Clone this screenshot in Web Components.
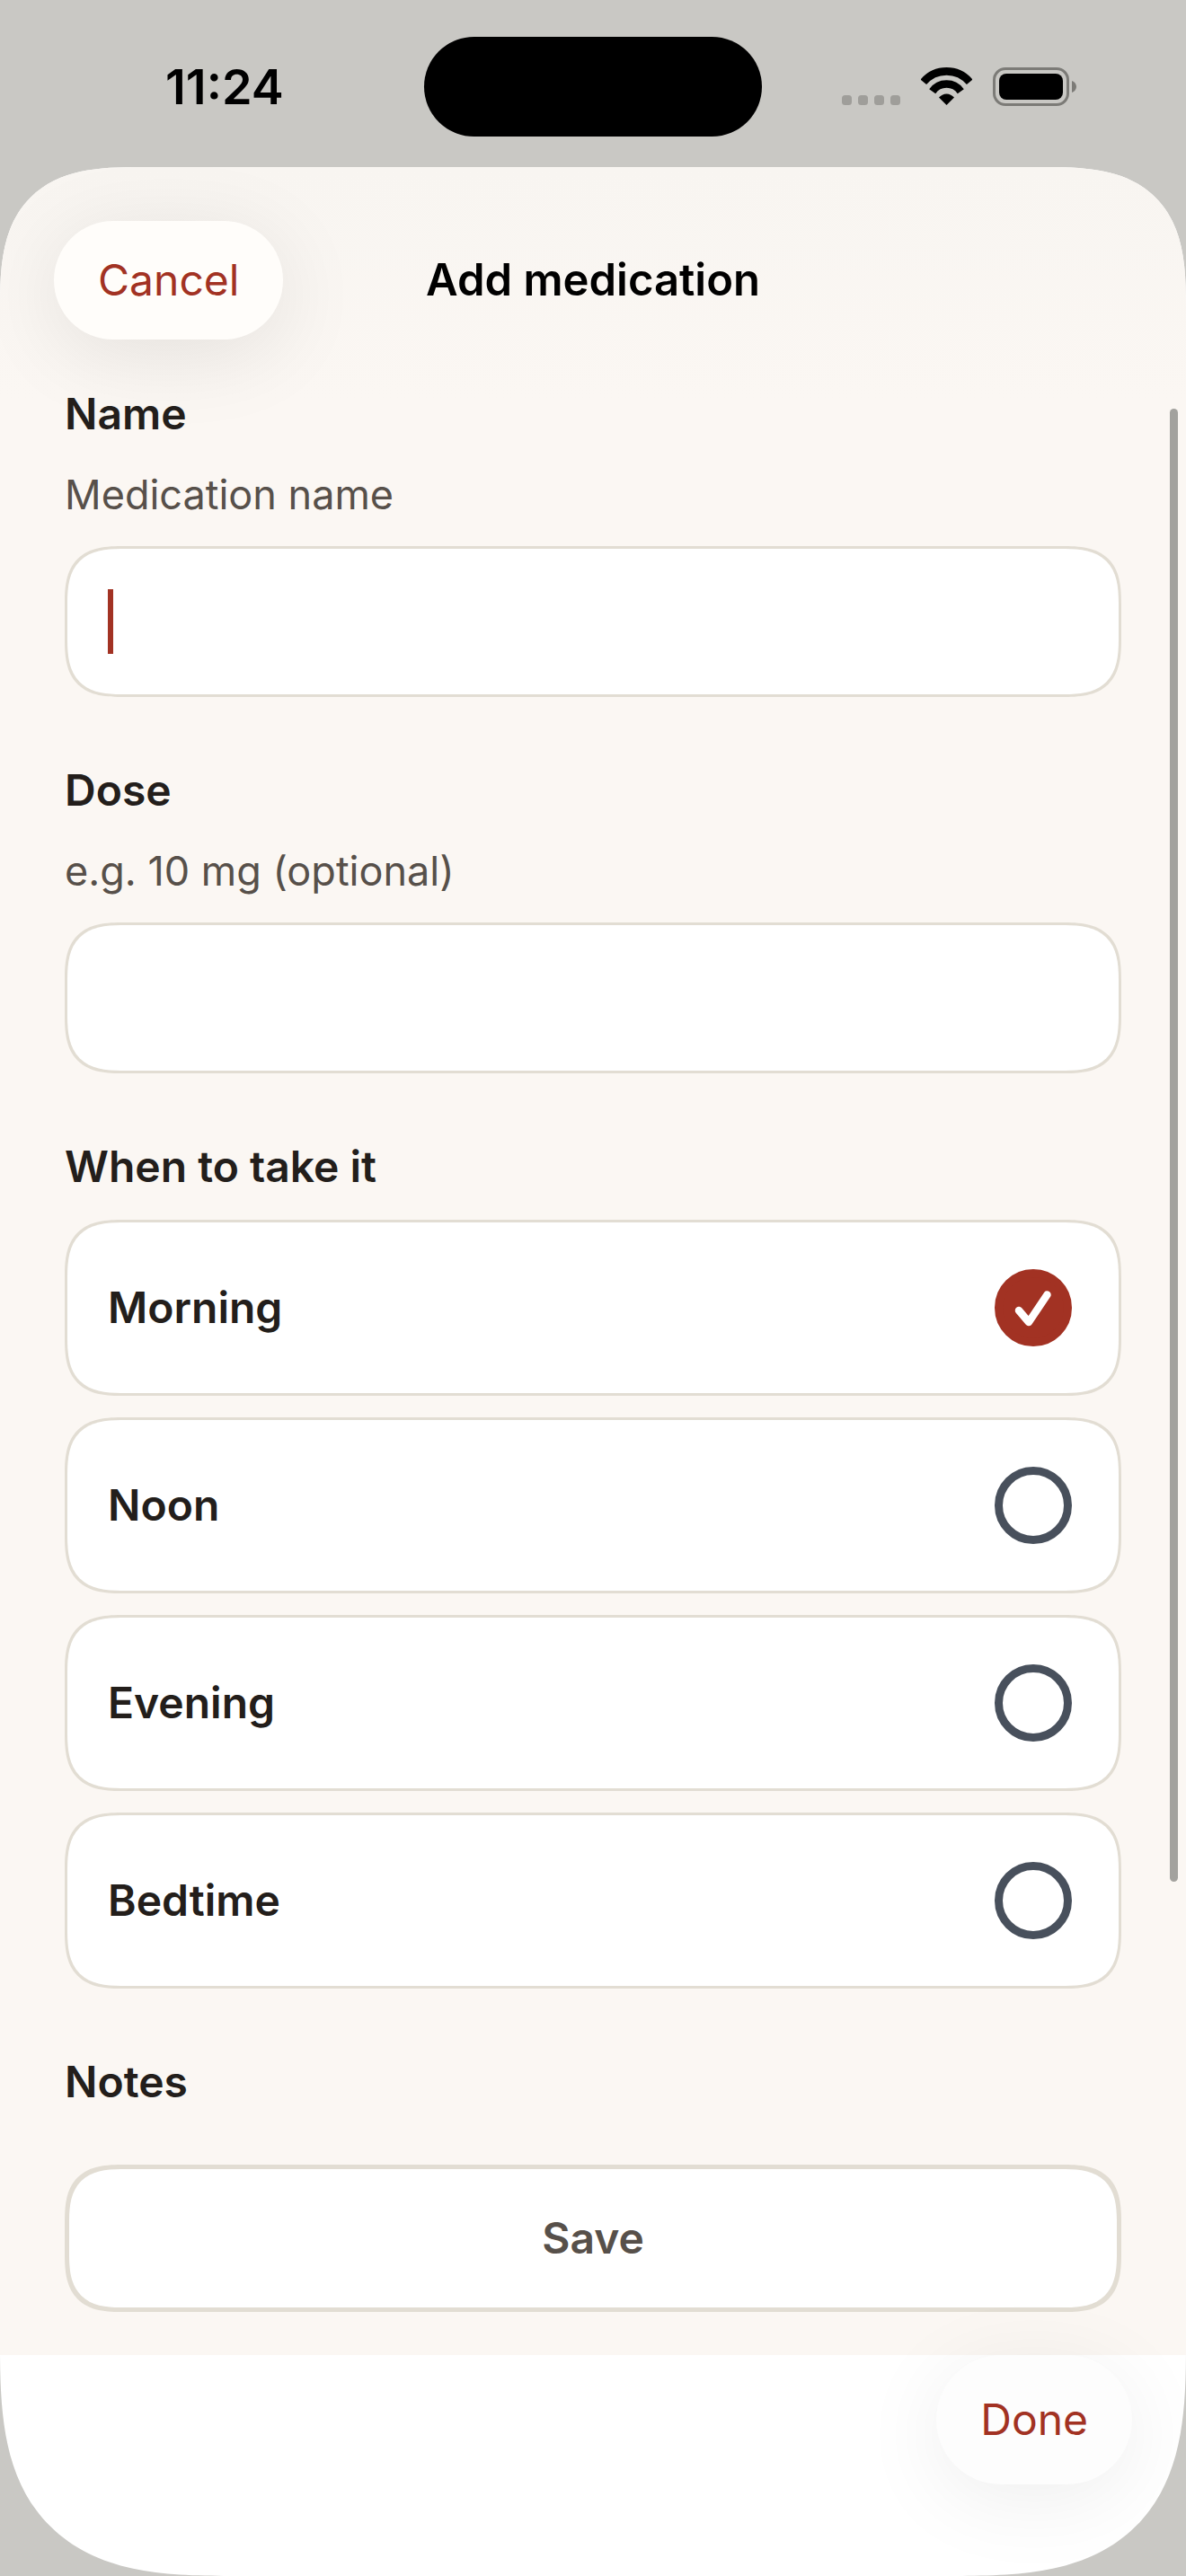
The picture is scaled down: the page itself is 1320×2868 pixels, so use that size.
<!DOCTYPE html>
<html lang="en">
<head>
<meta charset="utf-8">
<meta name="viewport" content="width=device-width, initial-scale=1">
<title>Add medication</title>
<style>
    :root {
        --accent: #a23223;
        --text: #231e1b;
        --muted: #57504a;
        --page: #fbf7f3;
        --line: #e2ddd3;
        --ring: #48505c;
        --text-size: 48px;
        --title-size: 49px;
        --hint-size: 45px;
        --row: 60px;
        --card-radius: 48px;
        --card-shape: round;
    }

    @supports (corner-shape: superellipse(1.5)) {
        :root {
            --card-radius: 66px;
            --card-shape: superellipse(1.5);
        }
    }

    body {
        margin: 0;
        background: #c9c8c4;
        color: var(--text);
        font-family: Inter, "Liberation Sans", sans-serif;
        font-size: var(--text-size);
        line-height: var(--row);
    }
</style>
</head>
<body>
<medication-app></medication-app>

<script>
class StatusBar extends HTMLElement {
    constructor() {
        super();
        this.attachShadow({ mode: 'open' });
    }

    connectedCallback() {
        const hora = this.getAttribute('time') || '';

        this.shadowRoot.innerHTML = `
        <style>
            :host {
                display: grid;
                grid-template-columns: 1fr 376px 1fr;
                align-items: center;
                padding: 41px 0 34px;
                color: #000;
            }

            .time {
                padding-left: 184px;
                font-size: 54px;
                font-weight: 600;
            }

            .island {
                height: 111px;
                border-radius: 56px;
                background: #000;
            }

            .icons {
                display: flex;
                gap: 23px;
                padding-left: 89px;
            }
        </style>

        <span class="time">${hora}</span>
        <span class="island"></span>
        <span class="icons">
            <svg width="65" height="43" viewBox="0 0 65 43" fill="#9f9e9a" aria-hidden="true">
                <rect x="0" y="31" width="11" height="11" rx="3.5"></rect>
                <rect x="18" y="31" width="11" height="11" rx="3.5"></rect>
                <rect x="36" y="31" width="11" height="11" rx="3.5"></rect>
                <rect x="54" y="31" width="11" height="11" rx="3.5"></rect>
            </svg>
            <svg width="57" height="43" viewBox="0 0 57 43" fill="none" stroke="#000" stroke-width="8.6" aria-label="Wi-Fi">
                <path d="M2.8 16.3A33.6 33.6 0 0 1 54.2 16.3"></path>
                <path d="M12.7 26.7A19.4 19.4 0 0 1 44.3 26.7"></path>
                <path d="M28.5 42 20 33.6A11 11 0 0 1 37 33.6Z" fill="#000" stroke="none"></path>
            </svg>
            <svg width="93" height="43" viewBox="0 0 93 43" aria-label="Battery full">
                <rect x="1.5" y="1.5" width="82" height="40" rx="12.5" fill="none" stroke="#7c7b77" stroke-width="3"></rect>
                <rect x="7" y="7" width="71" height="29" rx="8" fill="#000"></rect>
                <path d="M88 15c3 1 5 3.6 5 6.5s-2 5.5-5 6.5z" fill="#7c7b77"></path>
            </svg>
        </span>
        `;
    }
}

class PillButton extends HTMLElement {
    constructor() {
        super();
        this.attachShadow({ mode: 'open' });
    }

    connectedCallback() {
        this.shadowRoot.innerHTML = `
        <style>
            :host {
                display: block;
            }

            button {
                display: block;
                padding: var(--pill-pad, 36px) 49px;
                border: 0;
                border-radius: 72px;
                background: var(--pill-fill, #fffdfa);
                box-shadow: 0 16px 96px rgba(0, 0, 0, var(--pill-shade, 0.09));
                color: var(--accent);
                font: inherit;
                cursor: pointer;
            }
        </style>

        <button type="button"><slot></slot></button>
        `;
    }
}

class FormField extends HTMLElement {
    constructor() {
        super();
        this.attachShadow({ mode: 'open' });
    }

    connectedCallback() {
        const titulo = this.getAttribute('label') || '';
        const ayuda = this.getAttribute('hint') || '';

        this.shadowRoot.innerHTML = `
        <style>
            :host {
                display: flex;
                flex-direction: column;
            }

            label {
                font-weight: 600;
            }

            .hint {
                margin: 30px 0 27px;
                color: var(--muted);
                font-size: var(--hint-size);
            }

            .box {
                display: grid;
                align-items: center;
            }

            input {
                grid-area: 1 / 1;
                box-sizing: border-box;
                width: 100%;
                height: 168px;
                padding: 45px;
                border: 3px solid var(--line);
                border-radius: var(--card-radius);
                corner-shape: var(--card-shape);
                background: #fff;
                color: inherit;
                font: inherit;
                outline: none;
                caret-color: transparent;
            }

            :host([active]) .box::after {
                content: "";
                grid-area: 1 / 1;
                width: 6px;
                height: 72px;
                margin-left: 48px;
                background: var(--accent);
            }
        </style>

        <label for="campo">${titulo}</label>
        <span class="hint" id="ayuda">${ayuda}</span>
        <div class="box">
            <input id="campo" type="text" aria-describedby="ayuda">
        </div>
        `;
    }
}

class TimeOption extends HTMLElement {
    constructor() {
        super();
        this.attachShadow({ mode: 'open' });
    }

    connectedCallback() {
        const marcado = this.hasAttribute('checked') ? 'checked' : '';

        this.shadowRoot.innerHTML = `
        <style>
            :host {
                display: block;
            }

            label {
                display: flex;
                align-items: center;
                justify-content: space-between;
                padding: 52px 52px 52px 45px;
                border: 3px solid var(--line);
                border-radius: var(--card-radius);
                corner-shape: var(--card-shape);
                background: #fff;
                font-weight: 600;
                cursor: pointer;
            }

            .mark {
                display: grid;
            }

            input {
                grid-area: 1 / 1;
                appearance: none;
                box-sizing: border-box;
                width: 86px;
                height: 86px;
                margin: 0;
                border: 9px solid var(--ring);
                border-radius: 50%;
            }

            input:checked {
                border-color: var(--accent);
                background: var(--accent);
            }

            svg {
                grid-area: 1 / 1;
                visibility: hidden;
                pointer-events: none;
            }

            input:checked + svg {
                visibility: visible;
            }
        </style>

        <label>
            <slot></slot>
            <span class="mark">
                <input type="checkbox" ${marcado}>
                <svg width="86" height="86" viewBox="0 0 86 86" fill="none" stroke="#fff" stroke-width="8.5" stroke-linecap="round" stroke-linejoin="round" aria-hidden="true">
                    <path d="M27 46 38 59 58.5 28.5"></path>
                </svg>
            </span>
        </label>
        `;
    }
}

class SaveButton extends HTMLElement {
    constructor() {
        super();
        this.attachShadow({ mode: 'open' });
    }

    connectedCallback() {
        this.shadowRoot.innerHTML = `
        <style>
            :host {
                display: block;
            }

            button {
                display: block;
                width: 100%;
                padding: 47px;
                border: 5px solid var(--line);
                border-radius: var(--card-radius);
                corner-shape: var(--card-shape);
                background: #fff;
                color: var(--muted);
                font: inherit;
                font-weight: 600;
                cursor: pointer;
            }
        </style>

        <button type="submit"><slot></slot></button>
        `;
    }
}

class MedicationApp extends HTMLElement {
    constructor() {
        super();
        this.attachShadow({ mode: 'open' });
    }

    connectedCallback() {
        this.shadowRoot.innerHTML = `
        <style>
            :host {
                display: flex;
                flex-direction: column;
                min-height: 100vh;
            }

            main {
                flex: 1;
                display: flex;
                flex-direction: column;
                overflow: hidden;
                border-radius: 110px 110px 188px 188px;
                background: #fff;
            }

            @supports (corner-shape: superellipse(1.5)) {
                main {
                    border-radius: 156px 156px 256px 256px;
                    corner-shape: superellipse(1.5);
                }
            }

            .sheet {
                flex: 1;
                display: flex;
                flex-direction: column;
                background: linear-gradient(#f8f5f1, var(--page) 260px);
            }

            header {
                display: grid;
                grid-template-columns: 1fr auto 1fr;
                align-items: center;
                padding: 60px 60px 0;
            }

            header pill-button {
                justify-self: start;
            }

            h1 {
                margin: 0;
                color: #000;
                font-size: var(--title-size);
                font-weight: 600;
            }

            .scroll {
                flex: 1;
                position: relative;
                display: flex;
                flex-direction: column;
                gap: 74px;
                padding: 53px 72px 62px;
            }

            .thumb {
                position: absolute;
                top: 77px;
                right: 9px;
                bottom: 315px;
                width: 9px;
                border-radius: 5px;
                background: #a3a29e;
            }

            fieldset {
                display: flex;
                flex-direction: column;
                gap: 24px;
                margin: 0;
                padding: 0;
                border: 0;
            }

            legend, h2 {
                margin: 0;
                padding: 0;
                font-size: var(--text-size);
                font-weight: 600;
            }

            legend {
                padding-bottom: 29px;
            }

            .save {
                padding: 0 72px 48px;
            }

            footer {
                --pill-pad: 42px;
                --pill-fill: #fdfdfd;
                --pill-shade: 0.07;
                display: flex;
                justify-content: flex-end;
                padding: 0 60px 102px;
            }
        </style>

        <status-bar time="11:24"></status-bar>
        <main>
            <div class="sheet">
                <header>
                    <pill-button>Cancel</pill-button>
                    <h1>Add medication</h1>
                </header>
                <div class="scroll">
                    <form-field label="Name" hint="Medication name" active></form-field>
                    <form-field label="Dose" hint="e.g. 10 mg (optional)"></form-field>
                    <fieldset>
                        <legend>When to take it</legend>
                        <time-option checked>Morning</time-option>
                        <time-option>Noon</time-option>
                        <time-option>Evening</time-option>
                        <time-option>Bedtime</time-option>
                    </fieldset>
                    <h2>Notes</h2>
                    <span class="thumb"></span>
                </div>
                <div class="save">
                    <save-button>Save</save-button>
                </div>
            </div>
            <footer>
                <pill-button>Done</pill-button>
            </footer>
        </main>
        `;
    }
}

customElements.define('status-bar', StatusBar);
customElements.define('pill-button', PillButton);
customElements.define('form-field', FormField);
customElements.define('time-option', TimeOption);
customElements.define('save-button', SaveButton);
customElements.define('medication-app', MedicationApp);
</script>
</body>
</html>
